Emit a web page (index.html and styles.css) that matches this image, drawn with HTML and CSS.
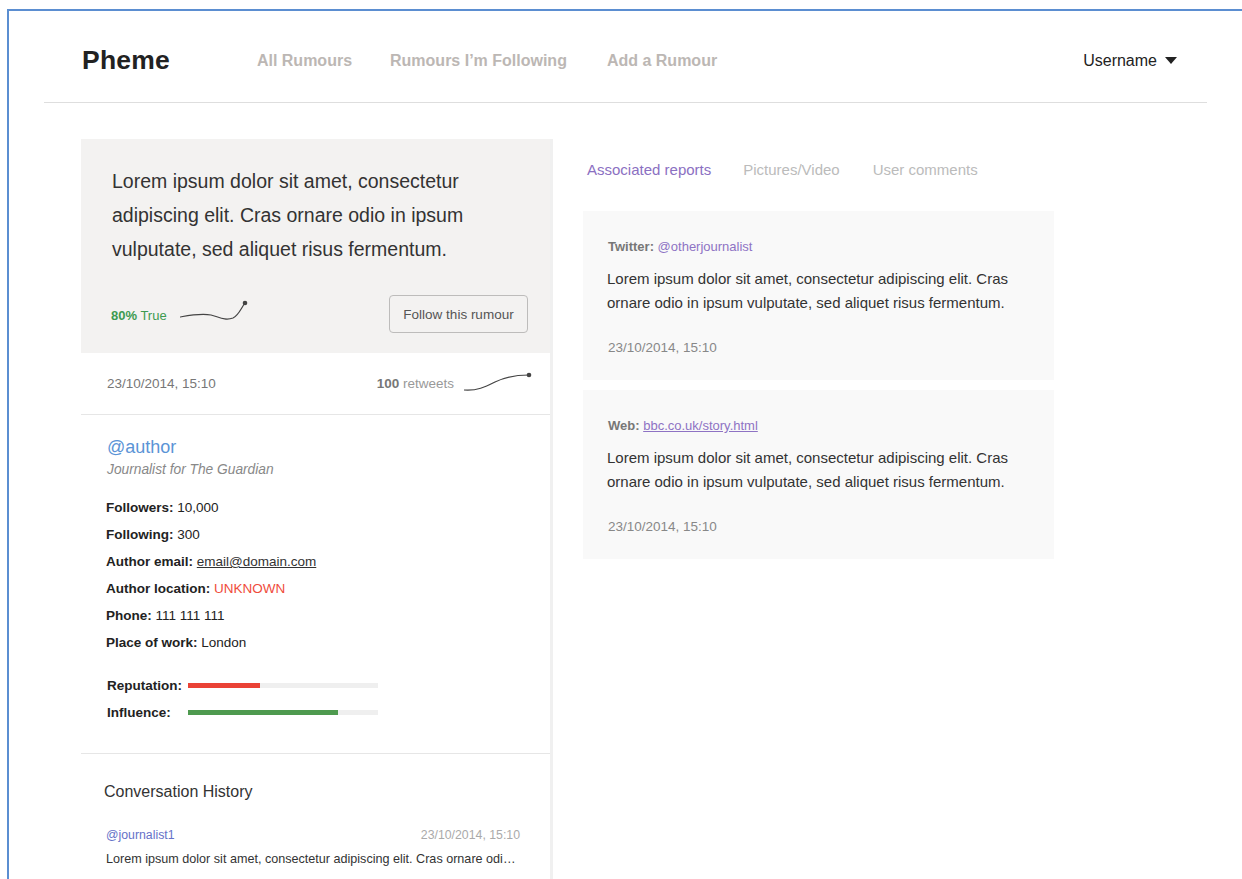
FILE: index.html
```html
<!DOCTYPE html>
<html lang="en">
<head>
<meta charset="utf-8">
<title>Pheme</title>
<link rel="stylesheet" href="styles.css">
</head>
<body>
<div class="frame">
  <header class="topbar">
    <div class="brand">Pheme</div>
    <nav class="nav">
      <a class="nav-link">All Rumours</a>
      <a class="nav-link">Rumours I’m Following</a>
      <a class="nav-link">Add a Rumour</a>
    </nav>
    <div class="user">Username <span class="caret"></span></div>
  </header>

  <main class="main">
    <section class="rumour-col">
      <div class="rumour-box">
        <p class="rumour-text">Lorem ipsum dolor sit amet, consectetur adipiscing elit. Cras ornare odio in ipsum vulputate, sed aliquet risus fermentum.</p>
        <div class="rumour-foot">
          <div class="truth">
            <span class="truth-label"><b>80%</b> True</span>
            <svg class="spark" width="72" height="22" viewBox="0 0 72 22">
              <path d="M1 17 C 12 15, 22 13, 32 15 C 40 17, 46 21, 54 18 C 60 15, 62 8, 66 3" fill="none" stroke="#444" stroke-width="1.2"/>
              <circle cx="66" cy="3" r="2.3" fill="#444"/>
            </svg>
          </div>
          <button class="follow-btn">Follow this rumour</button>
        </div>
      </div>

      <div class="meta-row">
        <span class="meta-date">23/10/2014, 15:10</span>
        <div class="retweets">
          <span><b>100</b> retweets</span>
          <svg class="spark" width="70" height="22" viewBox="0 0 70 22">
            <path d="M1 19 C 14 20, 22 16, 32 11 C 42 6, 52 4, 66 4" fill="none" stroke="#444" stroke-width="1.2"/>
            <circle cx="66" cy="4" r="2.3" fill="#444"/>
          </svg>
        </div>
      </div>

      <div class="author">
        <div class="author-handle">@author</div>
        <div class="author-role">Journalist for The Guardian</div>
        <ul class="facts">
          <li><b>Followers:</b> 10,000</li>
          <li><b>Following:</b> 300</li>
          <li><b>Author email:</b> <a class="email">email@domain.com</a></li>
          <li><b>Author location:</b> <span class="unknown">UNKNOWN</span></li>
          <li><b>Phone:</b> 111 111 111</li>
          <li><b>Place of work:</b> London</li>
        </ul>
        <div class="meters">
          <div class="meter">
            <b class="meter-label">Reputation:</b>
            <div class="track"><div class="fill fill-red" style="width:38%"></div></div>
          </div>
          <div class="meter">
            <b class="meter-label">Influence:</b>
            <div class="track"><div class="fill fill-green" style="width:79%"></div></div>
          </div>
        </div>
      </div>

      <div class="history">
        <h3 class="history-title">Conversation History</h3>
        <div class="msg">
          <div class="msg-head">
            <span class="msg-user">@journalist1</span>
            <span class="msg-date">23/10/2014, 15:10</span>
          </div>
          <p class="msg-text">Lorem ipsum dolor sit amet, consectetur adipiscing elit. Cras ornare odi…</p>
        </div>
      </div>
    </section>

    <section class="reports-col">
      <div class="tabs">
        <a class="tab active">Associated reports</a>
        <a class="tab">Pictures/Video</a>
        <a class="tab">User comments</a>
      </div>

      <article class="report">
        <div class="report-src"><b>Twitter:</b> <span class="src-handle">@otherjournalist</span></div>
        <p class="report-text">Lorem ipsum dolor sit amet, consectetur adipiscing elit. Cras ornare odio in ipsum vulputate, sed aliquet risus fermentum.</p>
        <div class="report-date">23/10/2014, 15:10</div>
      </article>

      <article class="report">
        <div class="report-src"><b>Web:</b> <a class="src-link">bbc.co.uk/story.html</a></div>
        <p class="report-text">Lorem ipsum dolor sit amet, consectetur adipiscing elit. Cras ornare odio in ipsum vulputate, sed aliquet risus fermentum.</p>
        <div class="report-date">23/10/2014, 15:10</div>
      </article>
    </section>
  </main>
</div>
</body>
</html>
```

FILE: styles.css
```css
html, body {
  margin: 0;
  padding: 0;
  background: #fff;
  overflow: hidden;
}

body {
  font-family: "Liberation Sans", Arial, Helvetica, sans-serif;
  color: #333;
  width: 1242px;
  height: 879px;
}

.frame {
  margin: 9px 0 0 7px;
  border-top: 2px solid #5b8ed1;
  border-left: 2px solid #5b8ed1;
  height: 900px;
  box-sizing: border-box;
}

/* Top navigation bar */
.topbar {
  display: flex;
  align-items: center;
  height: 92px;
  margin: 0 35px 0 35px;
  padding: 8px 30px 0 38px;
  border-bottom: 1px solid #dedede;
  box-sizing: border-box;
}

.brand {
  font-size: 26.5px;
  font-weight: bold;
  color: #222;
  letter-spacing: 0.2px;
}

.nav {
  display: flex;
  gap: 38px;
  margin-left: 87px;
}

.nav-link {
  font-size: 16px;
  font-weight: bold;
  color: #bcb7b4;
}

.nav-link + .nav-link + .nav-link {
  margin-left: 2px;
}

.user {
  margin-left: auto;
  font-size: 16px;
  color: #222;
  display: flex;
  align-items: center;
  gap: 8px;
}

.caret {
  width: 0;
  height: 0;
  border-left: 6.5px solid transparent;
  border-right: 6.5px solid transparent;
  border-top: 7px solid #222;
}

/* Main two-column area */
.main {
  display: flex;
  align-items: flex-start;
  margin: 36px 0 0 72px;
  gap: 30px;
}

.rumour-col {
  width: 469px;
  border-right: 3px solid #f0f0f0;
  min-height: 760px;
}

.rumour-box {
  background: #f3f2f1;
  padding: 25px 56px 20px 31px;
}

.rumour-text {
  margin: 0;
  font-size: 19.5px;
  line-height: 34px;
  color: #333;
}

.rumour-foot {
  display: flex;
  align-items: center;
  justify-content: space-between;
  margin-top: 29px;
  margin-right: -34px;
  margin-left: -1px;
}

.truth {
  display: flex;
  align-items: center;
  gap: 12px;
  margin-top: 2px;
}

.truth-label {
  font-size: 13px;
  color: #3d9a50;
}

.truth-label b {
  font-weight: bold;
}

.spark {
  display: block;
}

.truth .spark {
  margin-top: -8px;
}

.follow-btn {
  font-family: inherit;
  font-size: 13.5px;
  color: #555;
  background: #f3f2f1;
  border: 1px solid #bdbcbb;
  border-radius: 4px;
  height: 38px;
  width: 139px;
  padding: 0;
}

.meta-row {
  display: flex;
  align-items: center;
  justify-content: space-between;
  height: 61px;
  padding: 0 17px 0 26px;
  border-bottom: 1px solid #e6e6e6;
  font-size: 13.5px;
}

.meta-date {
  color: #777;
}

.retweets {
  display: flex;
  align-items: center;
  gap: 9px;
  color: #999;
}

.retweets b {
  color: #777;
}

.retweets .spark {
  margin-top: -3px;
}

/* Author details */
.author {
  padding: 21px 20px 27px 25px;
  border-bottom: 1px solid #e6e6e6;
}

.author-handle {
  font-size: 18px;
  line-height: 22px;
  color: #5b94d6;
  margin-left: 1px;
}

.author-role {
  font-size: 13.75px;
  line-height: 16px;
  font-style: italic;
  color: #888;
  margin-top: 4px;
  margin-left: 1px;
}

.facts {
  list-style: none;
  margin: 16px 0 0 0;
  padding: 0;
}

.facts li {
  font-size: 13.5px;
  line-height: 27px;
  color: #222;
}

.facts b {
  color: #222;
}

.email {
  color: #333;
  text-decoration: underline;
}

.unknown {
  color: #ef4b3c;
}

.meters {
  margin: 16px 0 0 1px;
}

.meter {
  display: flex;
  align-items: center;
  height: 27px;
  font-size: 13.5px;
  color: #222;
}

.meter-label {
  width: 81px;
}

.track {
  width: 190px;
  height: 5px;
  background: #efefef;
}

.fill {
  height: 100%;
}

.fill-red {
  background: #ea4236;
}

.fill-green {
  background: #4e9a4f;
}

/* Conversation history */
.history {
  padding: 28px 30px 0 23px;
}

.history-title {
  margin: 0;
  font-size: 16px;
  line-height: 20px;
  font-weight: normal;
  color: #333;
}

.msg {
  margin-top: 25px;
  margin-left: 2px;
}

.msg-head {
  display: flex;
  justify-content: space-between;
  font-size: 12.3px;
  line-height: 16px;
}

.msg-user {
  color: #6571c8;
}

.msg-date {
  color: #aaa;
}

.msg-text {
  margin: 8px 0 0 0;
  font-size: 12.6px;
  line-height: 16px;
  color: #333;
  white-space: nowrap;
}

/* Reports column */
.reports-col {
  width: 471px;
}

.tabs {
  display: flex;
  gap: 32px;
  padding: 22px 0 0 4px;
  font-size: 15px;
  line-height: 18px;
}

.tab {
  color: #bbb;
}

.tab + .tab + .tab {
  margin-left: 1px;
}

.tab.active {
  color: #8b70c2;
}

.report {
  background: #f9f9f9;
  padding: 28px 27px 24px 24px;
  margin-top: 32px;
}

.report + .report {
  margin-top: 10px;
}

.report-src {
  font-size: 13px;
  line-height: 16px;
  color: #777;
  margin-left: 1px;
}

.src-handle {
  color: #8e73c4;
}

.src-link {
  color: #8e73c4;
  text-decoration: underline;
}

.report-text {
  margin: 12px 0 0 0;
  font-size: 15px;
  line-height: 24px;
  color: #333;
}

.report-date {
  margin-top: 25px;
  font-size: 13.5px;
  line-height: 16px;
  color: #888;
  margin-left: 1px;
}
```
